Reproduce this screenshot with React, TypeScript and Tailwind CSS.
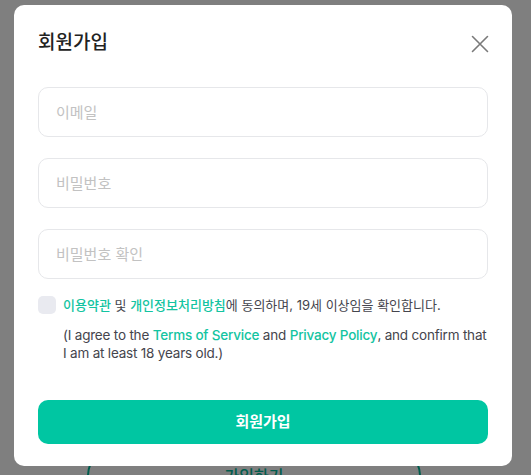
import { useState } from 'react'

const font = { fontFamily: 'Inter, "Noto Sans CJK KR", sans-serif' }

function CloseIcon() {
  return (
    <svg width="18" height="18" viewBox="0 0 18 18" fill="none">
      <path d="M1.5 1.5L16.5 16.5M16.5 1.5L1.5 16.5" stroke="#7a7a7a" strokeWidth="1.6" strokeLinecap="round" />
    </svg>
  )
}

function Field({ placeholder, type = 'text' }: { placeholder: string; type?: string }) {
  return (
    <input
      type={type}
      placeholder={placeholder}
      className="h-[50px] w-full rounded-[10px] border border-[#e6e7ea] bg-white px-[17px] text-[15px] text-[#333] outline-none placeholder:text-[#c2c2c2]"
    />
  )
}

export default function App() {
  const [agree, setAgree] = useState(false)

  return (
    <div className="relative h-[475px] w-[531px] overflow-hidden bg-white" style={font}>
      {/* page behind the dialog */}
      <div className="flex flex-col pl-[87px] pt-[446px]">
        <button className="flex h-[60px] w-[334px] items-center justify-center rounded-full border-2 border-[#00b99a] text-[16px] font-medium text-[#00b99a]">
          가입하기
        </button>
      </div>

      {/* dim overlay + dialog */}
      <div className="absolute inset-0 bg-black/50">
        <div className="ml-[14px] mt-[5px] flex h-[461px] w-[498px] flex-col rounded-[10px] bg-white px-6 pb-[22px] pt-[24px]">
          <div className="flex h-[28px] items-center justify-between">
            <h2 className="text-[19px] font-medium text-[#222]">회원가입</h2>
            <button className="-mr-[1px] mt-[1px]">
              <CloseIcon />
            </button>
          </div>

          <div className="mt-[30px] flex flex-col gap-[21px]">
            <Field placeholder="이메일" type="email" />
            <Field placeholder="비밀번호" type="password" />
            <Field placeholder="비밀번호 확인" type="password" />
          </div>

          <div className="mt-[17px] flex gap-[7px]">
            <button
              onClick={() => setAgree(!agree)}
              className={agree ? 'h-[18px] w-[18px] shrink-0 rounded-[5px] bg-[#00c6a2]' : 'h-[18px] w-[18px] shrink-0 rounded-[5px] bg-[#e9eaf0]'}
            />
            <div className="flex flex-col text-[#45454d]">
              <p className="text-[13px] leading-[18px]">
                <span className="font-medium text-[#13c4a1]">이용약관</span> 및{' '}
                <span className="font-medium text-[#13c4a1]">개인정보처리방침</span>에 동의하며, 19세 이상임을 확인합니다.
              </p>
              <p className="mt-[13px] text-[13.5px] leading-[17.5px] tracking-[-0.2px]">
                (I agree to the <span className="font-medium text-[#13c4a1]">Terms of Service</span> and{' '}
                <span className="font-medium text-[#13c4a1]">Privacy Policy</span>, and confirm that I am at least 18 years old.)
              </p>
            </div>
          </div>

          <button className="mt-auto h-[44px] w-full rounded-[10px] bg-[#00c6a2] text-[15px] font-semibold text-white">
            회원가입
          </button>
        </div>
      </div>
    </div>
  )
}
